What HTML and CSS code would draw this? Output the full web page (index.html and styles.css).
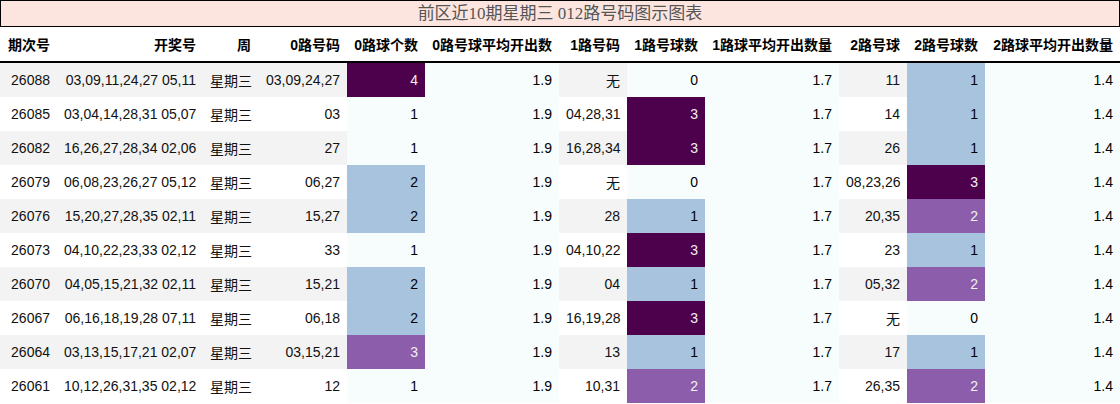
FILE: index.html
```html
<!DOCTYPE html>
<html>
<head>
<meta charset="utf-8">
<link rel="stylesheet" href="styles.css">
</head>
<body>
<div class="title">前区近10期星期三 012路号码图示图表</div>
<table class="grid">
<colgroup>
<col class="w57"><col class="w146"><col class="w55"><col class="w89">
<col class="w78"><col class="w134"><col class="w68"><col class="w78">
<col class="w134"><col class="w68"><col class="w78"><col class="w135">
</colgroup>
<thead>
<tr><th>期次号</th><th>开奖号</th><th>周</th><th>0路号码</th><th>0路球个数</th><th>0路号球平均开出数</th><th>1路号码</th><th>1路号球数</th><th>1路球平均开出数量</th><th>2路号球</th><th>2路号球数</th><th>2路球平均开出数量</th></tr>
</thead>
<tbody>
<tr class="odd"><td>26088</td><td>03,09,11,24,27 05,11</td><td>星期三</td><td>03,09,24,27</td><td class="g3">4</td><td class="g0">1.9</td><td>无</td><td class="g0">0</td><td class="g0">1.7</td><td>11</td><td class="g1">1</td><td class="g0">1.4</td></tr>
<tr><td>26085</td><td>03,04,14,28,31 05,07</td><td>星期三</td><td>03</td><td class="g0">1</td><td class="g0">1.9</td><td>04,28,31</td><td class="g3">3</td><td class="g0">1.7</td><td>14</td><td class="g1">1</td><td class="g0">1.4</td></tr>
<tr class="odd"><td>26082</td><td>16,26,27,28,34 02,06</td><td>星期三</td><td>27</td><td class="g0">1</td><td class="g0">1.9</td><td>16,28,34</td><td class="g3">3</td><td class="g0">1.7</td><td>26</td><td class="g1">1</td><td class="g0">1.4</td></tr>
<tr><td>26079</td><td>06,08,23,26,27 05,12</td><td>星期三</td><td>06,27</td><td class="g1">2</td><td class="g0">1.9</td><td>无</td><td class="g0">0</td><td class="g0">1.7</td><td>08,23,26</td><td class="g3">3</td><td class="g0">1.4</td></tr>
<tr class="odd"><td>26076</td><td>15,20,27,28,35 02,11</td><td>星期三</td><td>15,27</td><td class="g1">2</td><td class="g0">1.9</td><td>28</td><td class="g1">1</td><td class="g0">1.7</td><td>20,35</td><td class="g2">2</td><td class="g0">1.4</td></tr>
<tr><td>26073</td><td>04,10,22,23,33 02,12</td><td>星期三</td><td>33</td><td class="g0">1</td><td class="g0">1.9</td><td>04,10,22</td><td class="g3">3</td><td class="g0">1.7</td><td>23</td><td class="g1">1</td><td class="g0">1.4</td></tr>
<tr class="odd"><td>26070</td><td>04,05,15,21,32 02,11</td><td>星期三</td><td>15,21</td><td class="g1">2</td><td class="g0">1.9</td><td>04</td><td class="g1">1</td><td class="g0">1.7</td><td>05,32</td><td class="g2">2</td><td class="g0">1.4</td></tr>
<tr><td>26067</td><td>06,16,18,19,28 07,11</td><td>星期三</td><td>06,18</td><td class="g1">2</td><td class="g0">1.9</td><td>16,19,28</td><td class="g3">3</td><td class="g0">1.7</td><td>无</td><td class="g0">0</td><td class="g0">1.4</td></tr>
<tr class="odd"><td>26064</td><td>03,13,15,17,21 02,07</td><td>星期三</td><td>03,15,21</td><td class="g2">3</td><td class="g0">1.9</td><td>13</td><td class="g1">1</td><td class="g0">1.7</td><td>17</td><td class="g1">1</td><td class="g0">1.4</td></tr>
<tr><td>26061</td><td>10,12,26,31,35 02,12</td><td>星期三</td><td>12</td><td class="g0">1</td><td class="g0">1.9</td><td>10,31</td><td class="g2">2</td><td class="g0">1.7</td><td>26,35</td><td class="g2">2</td><td class="g0">1.4</td></tr>
</tbody>
</table>
</body>
</html>
```
FILE: styles.css
```css
html, body {
  margin: 0;
  padding: 0;
  background: #ffffff;
}
body {
  font-family: "Liberation Sans", "Noto Sans CJK SC", sans-serif;
  font-size: 14px;
  color: #111;
}
.title {
  box-sizing: border-box;
  width: 1120px;
  height: 27px;
  border: 1px solid #000;
  background: #fde5df;
  color: #555;
  font-family: "Liberation Serif", "Noto Sans CJK SC", serif;
  font-size: 17px;
  line-height: 25px;
  text-align: center;
}
.grid {
  width: 1120px;
  border-collapse: separate;
  table-layout: fixed;
  border-spacing: 0;
}
.w57 { width: 57px; }
.w146 { width: 146px; }
.w55 { width: 55px; }
.w89 { width: 89px; }
.w78 { width: 78px; }
.w134 { width: 134px; }
.w68 { width: 68px; }
.w135 { width: 135px; }
.grid th {
  height: 36px;
  padding: 0 7px;
  text-align: right;
  font-weight: bold;
  color: #000;
  white-space: nowrap;
  border-bottom: 2px solid #000;
  box-sizing: border-box;
  vertical-align: middle;
}
.grid td {
  height: 34px;
  padding: 0 7px;
  text-align: right;
  white-space: nowrap;
  vertical-align: middle;
  box-sizing: border-box;
}
.grid tr.odd td {
  background: #f3f3f3;
}
.grid td.g0, .grid tr.odd td.g0 { background: #f7fcfd; color: #000; }
.grid td.g1, .grid tr.odd td.g1 { background: #a7c3de; color: #000; }
.grid td.g2, .grid tr.odd td.g2 { background: #8b5daa; color: #f1f1f1; }
.grid td.g3, .grid tr.odd td.g3 { background: #4d004b; color: #f1f1f1; }
```
